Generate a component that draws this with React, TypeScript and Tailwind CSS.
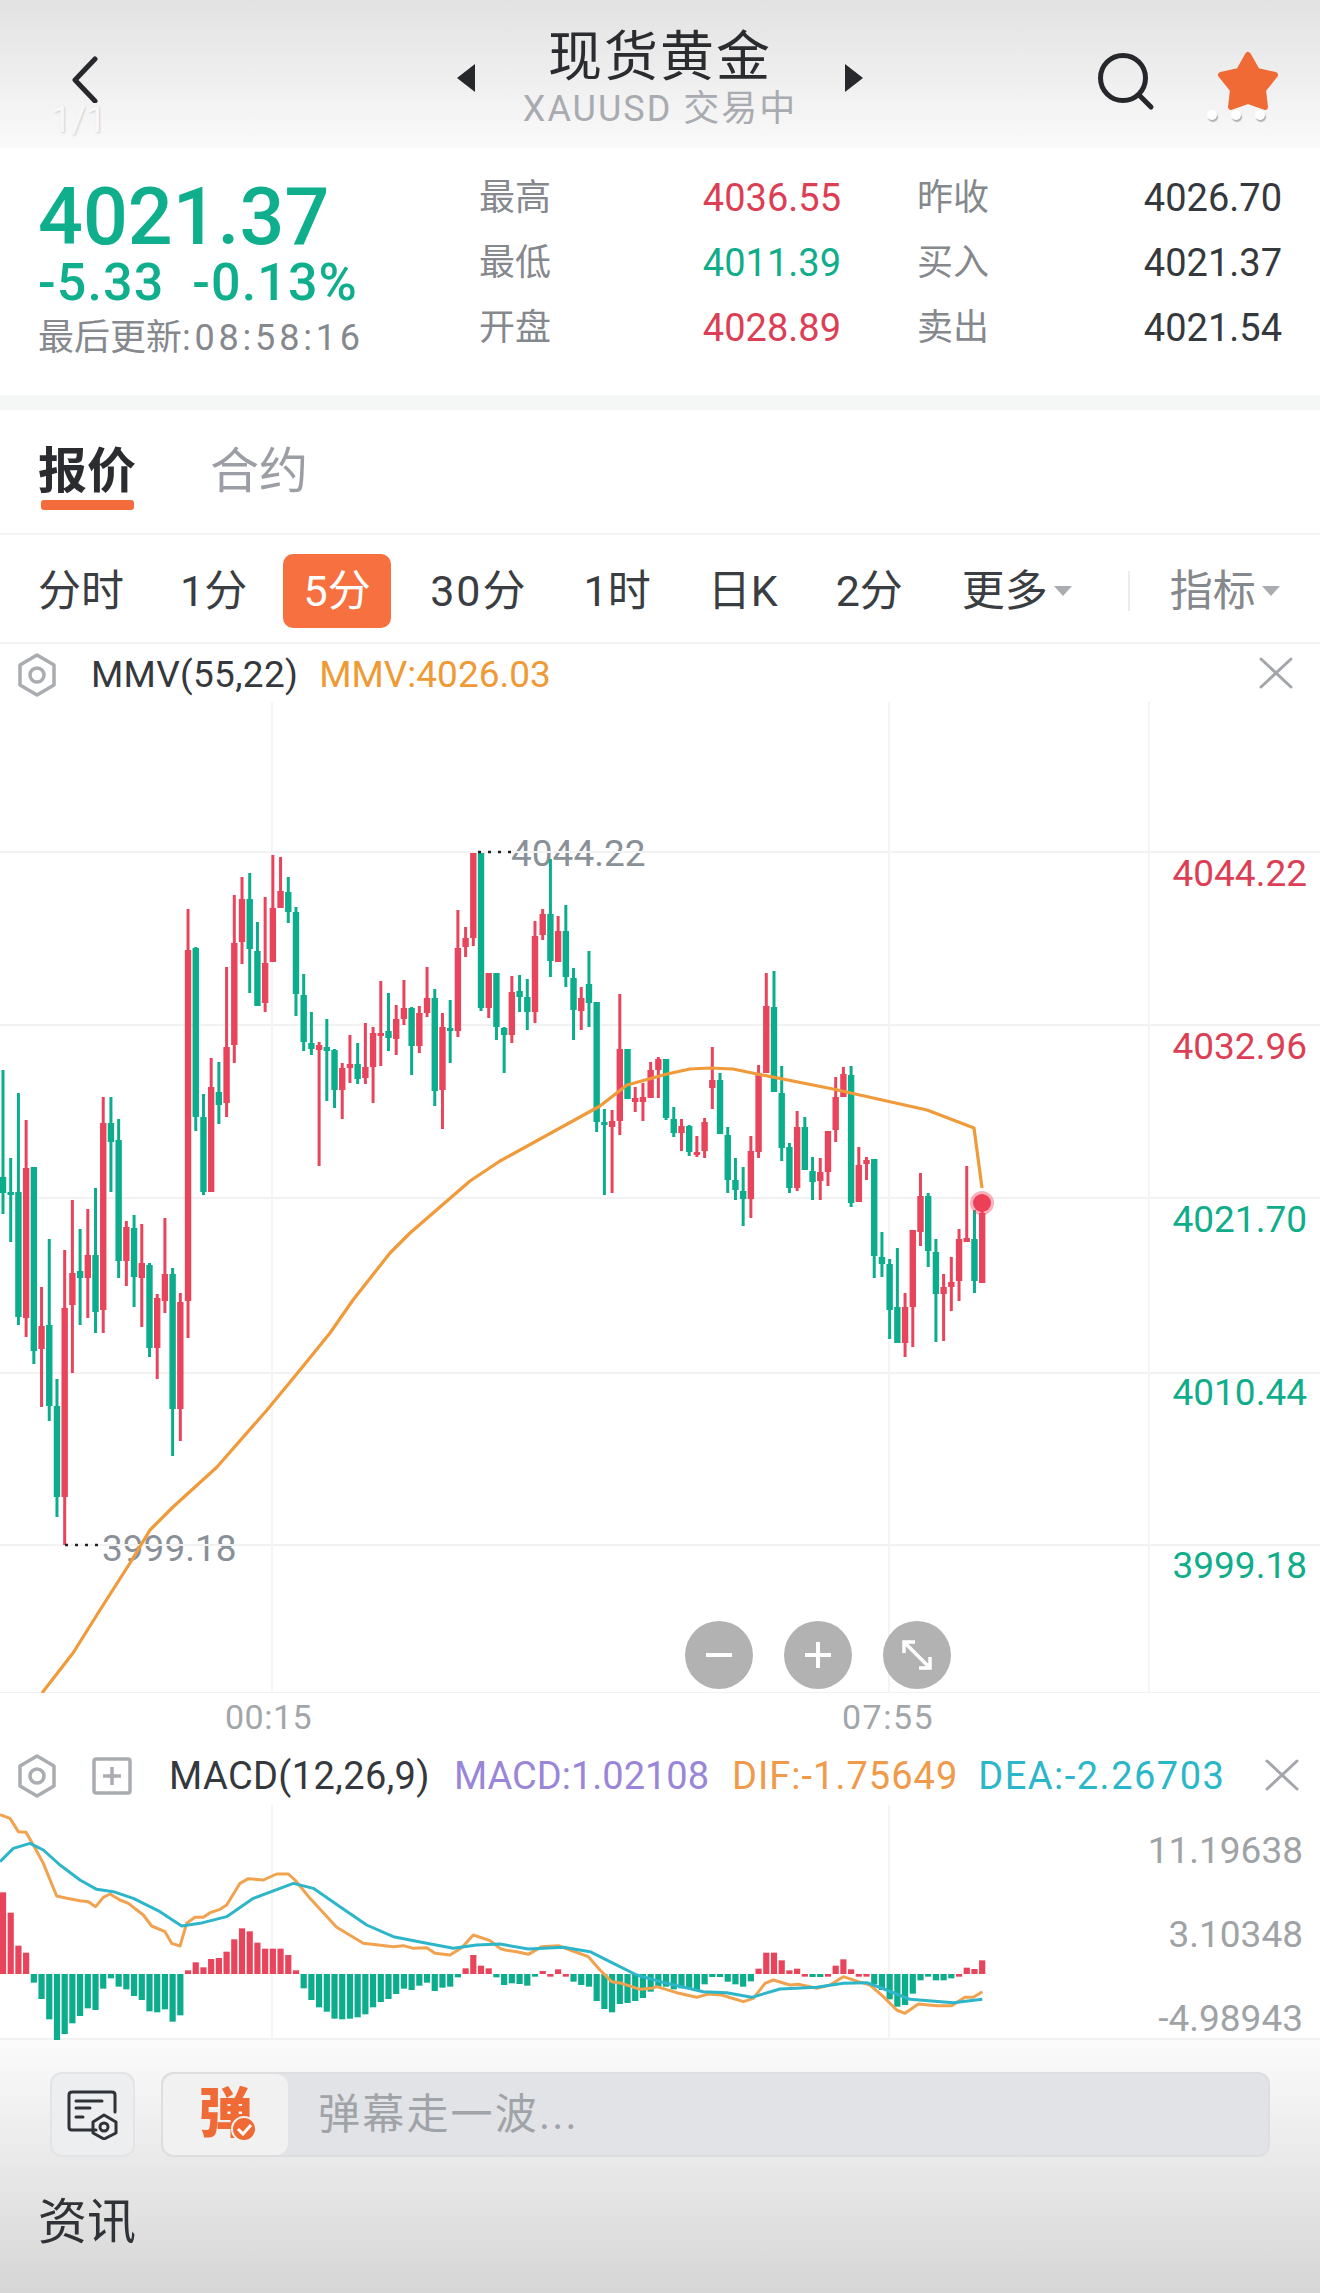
type Candle = [number, number, number, number, number];

// [0 red / 1 green, wick top, body top, body bottom, wick bottom], page coordinates
const CANDLES: Candle[] = [
  [1,1070,1177,1193,1214],[1,1158,1192,1194,1242],[1,1093,1192,1317,1325],[0,1120,1168,1318,1337],[1,1167,1167,1351,1364],
  [0,1287,1326,1349,1407],[1,1239,1325,1406,1421],[1,1379,1406,1497,1517],[0,1250,1308,1497,1545],[0,1200,1273,1305,1373],
  [1,1229,1271,1278,1325],[0,1209,1255,1278,1318],[1,1188,1255,1312,1333],[0,1097,1123,1310,1333],[1,1097,1123,1142,1192],
  [1,1119,1140,1261,1278],[0,1221,1227,1261,1286],[1,1215,1228,1277,1307],[0,1224,1263,1278,1327],[1,1263,1265,1348,1357],
  [0,1294,1298,1348,1379],[0,1218,1274,1301,1313],[1,1268,1274,1409,1456],[0,1293,1302,1409,1441],[0,909,950,1301,1338],
  [1,947,948,1117,1131],[1,1094,1117,1192,1195],[0,1058,1087,1192,1192],[1,1062,1092,1105,1124],[0,967,1047,1103,1117],
  [0,895,943,1045,1063],[0,877,899,942,964],[1,873,899,949,993],[1,922,951,1006,1006],[0,897,963,1003,1012],
  [0,855,908,962,962],[0,857,891,908,908],[1,877,892,912,923],[1,907,912,994,1016],[1,974,995,1042,1051],
  [1,1012,1043,1049,1055],[0,1042,1045,1050,1166],[1,1019,1047,1051,1101],[1,1049,1050,1090,1108],[0,1063,1068,1090,1119],
  [0,1035,1064,1068,1083],[1,1043,1064,1079,1084],[0,1023,1067,1078,1084],[0,1027,1033,1067,1103],[0,981,1033,1035,1066],
  [1,993,1031,1038,1051],[0,1005,1019,1039,1055],[0,980,1008,1019,1025],[1,1007,1008,1046,1075],[0,1006,1013,1046,1053],
  [0,967,998,1013,1017],[1,989,998,1091,1106],[0,1013,1027,1090,1129],[1,1000,1028,1030,1063],[0,910,948,1031,1037],
  [0,927,938,947,957],[0,853,853,938,946],[1,853,853,1008,1011],[0,973,973,1008,1018],[1,973,973,1027,1040],
  [1,1027,1028,1035,1073],[0,976,992,1035,1043],[1,975,991,997,1012],[1,979,997,1012,1030],[0,921,936,1012,1023],
  [0,909,914,935,940],[1,859,914,961,977],[0,916,931,962,962],[1,905,931,977,987],[1,968,978,1010,1040],
  [0,987,998,1011,1030],[1,951,984,1003,1027],[1,1002,1002,1122,1132],[1,1109,1122,1125,1195],[0,1110,1121,1127,1193],
  [0,994,1049,1121,1135],[1,1049,1049,1099,1099],[0,1087,1098,1102,1112],[0,1083,1097,1102,1121],[0,1062,1070,1098,1098],
  [0,1057,1059,1070,1098],[1,1059,1059,1118,1120],[1,1107,1119,1133,1137],[0,1119,1126,1133,1151],[1,1125,1126,1152,1156],
  [0,1136,1152,1155,1157],[0,1118,1122,1151,1158],[0,1047,1080,1088,1109],[1,1073,1080,1134,1134],[1,1127,1135,1180,1193],
  [1,1158,1180,1190,1200],[1,1167,1191,1199,1226],[0,1136,1151,1199,1218],[0,1065,1073,1152,1158],[0,973,1006,1073,1073],
  [1,971,1007,1092,1092],[1,1066,1093,1148,1161],[1,1143,1147,1188,1193],[0,1111,1127,1188,1191],[1,1117,1127,1170,1170],
  [1,1157,1171,1182,1200],[0,1158,1172,1181,1200],[0,1131,1131,1172,1186],[0,1077,1097,1130,1142],[0,1067,1074,1097,1097],
  [1,1066,1075,1203,1207],[0,1147,1165,1202,1202],[0,1157,1160,1164,1180],[1,1159,1159,1256,1278],[1,1232,1257,1264,1277],
  [1,1259,1264,1310,1339],[1,1248,1307,1343,1343],[0,1293,1307,1343,1357],[0,1230,1230,1307,1347],[0,1173,1196,1232,1246],
  [1,1193,1196,1251,1267],[1,1239,1252,1294,1342],[0,1274,1287,1294,1341],[0,1257,1282,1287,1311],[0,1229,1239,1281,1301],
  [0,1166,1238,1242,1242],[1,1210,1239,1281,1293],[0,1203,1213,1283,1283],
];

// MACD histogram, in thirds of a pixel off the zero line: plus is up
const HIST = [
  245,184,85,64,-26,-75,-136,-208,-180,-148,-126,-103,-108,-44,-13,-38,-46,-66,-78,-112,-115,-106,-143,-124,
  11,35,20,45,48,67,104,137,128,94,76,76,76,57,11,-43,-78,-100,-113,-134,-136,-134,-130,-121,-100,-84,-75,-60,-44,-48,-35,-26,-51,-41,-38,-10,
  17,57,25,17,-10,-33,-28,-30,-35,-8,9,-8,14,-8,-23,-33,-38,-81,-105,-115,-90,-87,-81,-72,-53,-38,-38,-46,-43,-43,-48,-31,-9,-9,-23,-31,-38,-22,
  16,64,64,41,11,16,-8,-9,-9,-8,25,44,14,-8,-8,-31,-48,-76,-98,-93,-59,-19,-8,-19,-19,-13,-8,19,15,41,
];
// small red dashes that sit just below the zero line
const RED_DASH = [71, 73, 104, 107, 111, 112, 124];

const MMV_LINE: number[][] = [
  [42,1693],[73,1653],[100,1610],[130,1563],[150,1530],[173,1507],[217,1467],[267,1410],[300,1370],[330,1333],[353,1300],[390,1253],[410,1233],
  [440,1207],[470,1181],[500,1161],[600,1106],[627,1085],[667,1074],[690,1069],[710,1068],[733,1069],[757,1074],[833,1089],[927,1110],[974,1128],[982,1188],
];

const DIF_LINE: number[][] = [
  [0,44],[30,55],[55,95],[78,97],[100,135],[130,190],[170,288],[200,295],[240,302],[265,305],[287,320],[310,292],[330,282],[360,300],[385,310],[430,345],
  [455,378],[495,395],[515,430],[540,438],[560,370],[585,352],[610,352],[630,338],[660,328],[680,315],[720,250],[745,236],[790,240],[830,222],[865,222],
  [885,240],[930,295],[1010,382],[1090,430],[1180,440],[1210,437],[1240,445],[1280,443],[1305,460],[1350,465],[1385,443],[1420,405],[1470,422],[1500,445],
  [1515,450],[1550,455],[1585,463],[1625,440],[1675,437],[1710,450],[1765,470],[1800,510],[1835,545],[1865,550],[1920,568],[1955,565],[1970,560],[2030,578],
  [2090,592],[2125,582],[2165,585],[2230,605],[2260,595],[2295,550],[2320,540],[2370,555],[2395,553],[2450,565],[2490,555],[2530,530],[2575,545],[2610,555],
  [2650,590],[2690,630],[2715,640],[2755,612],[2810,617],[2855,617],[2895,592],[2920,592],[2947,575],
];

const DEA_LINE: number[][] = [
  [0,185],[40,145],[90,130],[130,150],[180,195],[240,240],[290,268],[340,275],[400,295],[480,335],[545,378],[600,370],[680,350],[760,295],[880,250],[940,265],
  [1020,320],[1100,375],[1180,410],[1280,430],[1360,445],[1430,435],[1500,432],[1585,447],[1690,442],[1770,455],[1840,490],[1910,525],[2000,550],[2110,575],
  [2180,578],[2255,592],[2340,567],[2450,562],[2530,550],[2600,548],[2660,570],[2730,598],[2860,608],[2947,598],
];

const candleX = (i: number) => 3 + 7.71 * i;
const macdPoints = (line: number[][]) => line.map(([x, y]) => `${x / 3},${1800 + y / 3}`).join(" ");

const RED = "#e8455c";
const GREEN = "#0cad8c";

const STATS = [
  ["最高", "4036.55", "text-[#dc3f55]", "昨收", "4026.70"],
  ["最低", "4011.39", "text-[#10ad8b]", "买入", "4021.37"],
  ["开盘", "4028.89", "text-[#dc3f55]", "卖出", "4021.54"],
];

const HexIcon = () => (
  <svg width="42" height="46" viewBox="0 0 42 46" fill="none" stroke="#a9acb0" strokeWidth="3.5">
    <path d="M21 3 L38 13 L38 33 L21 43 L4 33 L4 13 Z" strokeLinejoin="round" />
    <circle cx="21" cy="23" r="7" />
  </svg>
);

const CloseIcon = () => (
  <svg width="36" height="34" viewBox="0 0 36 34" stroke="#a3a6aa" strokeWidth="3" strokeLinecap="round">
    <path d="M3 3 L33 31 M33 3 L3 31" />
  </svg>
);

const Triangle = () => (
  <svg width="20" height="12" viewBox="0 0 20 12" className="ml-[5px]">
    <path d="M1 1 H19 L10 11 Z" fill="#a9acb0" />
  </svg>
);

const Header = () => (
  <div className="relative h-[148px] flex items-start bg-gradient-to-b from-[#e2e2e2] to-[#fafafa]">
    <svg width="36" height="48" viewBox="0 0 36 48" className="ml-[67px] mt-[55px]" fill="none" stroke="#26282c" strokeWidth="5" strokeLinecap="round" strokeLinejoin="round">
      <path d="M28 4 L8 25 L28 46" />
    </svg>
    <svg width="22" height="30" viewBox="0 0 22 30" className="ml-[352px] mt-[63px]">
      <path d="M20 1 V29 L2 15 Z" fill="#26282c" />
    </svg>
    <div className="w-[366px] flex flex-col items-center">
      <div className="mt-[30px] text-[54px] leading-[56px] font-normal text-[#2a2c30] tracking-[2px]">现货黄金</div>
      <div className="mt-[3px] text-[36px] leading-[40px] text-[#a8abb0] tracking-[2px]">XAUUSD 交易中</div>
    </div>
    <svg width="22" height="30" viewBox="0 0 22 30" className="mt-[63px]">
      <path d="M2 1 V29 L20 15 Z" fill="#26282c" />
    </svg>
    <svg width="60" height="60" viewBox="0 0 60 60" className="ml-[233px] mt-[53px]" fill="none" stroke="#25272b" strokeWidth="5" strokeLinecap="round">
      <circle cx="25" cy="25" r="22.5" />
      <path d="M42 43 L53 54" />
    </svg>
    <svg width="66" height="62" viewBox="0 0 66 62" className="ml-[57px] mt-[50px]">
      <path d="M33 5 L42 21 L60 25 L48 40 L50 57 L33 51 L16 57 L18 40 L6 25 L24 21 Z" fill="#ef6a34" stroke="#ef6a34" strokeWidth="6" strokeLinejoin="round" />
    </svg>
    <div className="absolute left-[1207px] top-[110px] flex gap-[14px]">
      <span className="w-[10px] h-[10px] rounded-full bg-white shadow-[1px_2px_1px_#b0b0b0]" />
      <span className="w-[10px] h-[10px] rounded-full bg-white shadow-[1px_2px_1px_#b0b0b0]" />
      <span className="w-[10px] h-[10px] rounded-full bg-white shadow-[1px_2px_1px_#b0b0b0]" />
    </div>
    <div className="absolute left-[51px] top-[100px] text-[36px] leading-[40px] text-[#f8f8f8] [text-shadow:1px_1px_2px_#cfcfcf]">1/1</div>
  </div>
);

const Quote = () => (
  <div className="h-[247px] flex bg-white">
    <div className="w-[479px] pl-[38px] pt-[29px]">
      <div className="text-[79px] leading-[80px] font-medium text-[#0fae8c]">4021.37</div>
      <div className="text-[52px] leading-[50px] mt-[1px] font-medium tracking-[1.1px] text-[#0fae8c] whitespace-pre">-5.33  -0.13%</div>
      <div className="text-[36px] leading-[44px] mt-[8px] text-[#85888d]">
        最后更新<span className="tracking-[3.8px]">:08:58:16</span>
      </div>
    </div>
    <div className="mt-[27px] grid grid-cols-[362px_365px] gap-x-[76px] auto-rows-[65px]">
      {STATS.map(([a, av, color, b, bv]) => [
        <div key={a} className="flex justify-between items-center h-[46px]">
          <span className="text-[36px] text-[#85888d]">{a}</span>
          <span className={`text-[38px] ${color}`}>{av}</span>
        </div>,
        <div key={b} className="flex justify-between items-center h-[46px]">
          <span className="text-[36px] text-[#85888d]">{b}</span>
          <span className="text-[38px] text-[#35383c]">{bv}</span>
        </div>,
      ])}
    </div>
  </div>
);

const Tabs = () => (
  <div className="h-[125px] flex bg-white border-b-2 border-[#f3f3f3] pl-[38px]">
    <div className="flex flex-col items-center w-[98px] pt-[34px]">
      <span className="text-[49px] leading-[56px] font-bold text-[#2a2c30]">报价</span>
      <span className="w-[93px] h-[10px] rounded-[3px] bg-[#f56c3c]" />
    </div>
    <span className="ml-[74px] pt-[34px] text-[49px] leading-[56px] text-[#9b9ea4]">合约</span>
  </div>
);

const Periods = () => (
  <div className="h-[109px] flex items-center bg-white border-b-2 border-[#f3f3f3] text-[43px] text-[#3a3d42] pt-[5px]">
    <span className="ml-[38px]">分时</span>
    <span className="ml-[56px]">1分</span>
    <span className="ml-[36px] w-[108px] h-[74px] rounded-[10px] bg-[#f6713f] text-white flex items-center justify-center">5分</span>
    <span className="ml-[39px] tracking-[2px]">30分</span>
    <span className="ml-[56px]">1时</span>
    <span className="ml-[57px]">日K</span>
    <span className="ml-[58px]">2分</span>
    <span className="ml-[59px]">更多</span>
    <Triangle />
    <span className="ml-[55px] w-[2px] h-[40px] bg-[#ececec]" />
    <span className="ml-[40px] text-[#85888d]">指标</span>
    <Triangle />
  </div>
);

const IndicatorRow = () => (
  <div className="h-[58px] flex items-center bg-white text-[37px] tracking-[0.3px] pl-[16px] pt-[3px] relative">
    <HexIcon />
    <span className="ml-[33px] text-[#35383c]">MMV(55,22)</span>
    <span className="ml-[21px] text-[#ef9a35] tracking-[0px]">MMV:4026.03</span>
    <span className="absolute right-[26px] top-[12px] flex"><CloseIcon /></span>
  </div>
);

const ZoomButtons = () => (
  <div className="absolute left-[685px] top-[919px] flex gap-[31px]">
    <div className="w-[68px] h-[68px] rounded-full bg-[#b2b2b2] flex items-center justify-center">
      <svg width="30" height="30" viewBox="0 0 30 30" stroke="white" strokeWidth="4"><path d="M2 15 H28" /></svg>
    </div>
    <div className="w-[68px] h-[68px] rounded-full bg-[#b2b2b2] flex items-center justify-center">
      <svg width="30" height="30" viewBox="0 0 30 30" stroke="white" strokeWidth="4"><path d="M2 15 H28 M15 2 V28" /></svg>
    </div>
    <div className="w-[68px] h-[68px] rounded-full bg-[#b2b2b2] flex items-center justify-center">
      <svg width="36" height="36" viewBox="0 0 36 36" fill="none" stroke="white" strokeWidth="3.5">
        <path d="M5 5 L31 31 M5 16 V5 H16 M31 20 V31 H20" />
      </svg>
    </div>
  </div>
);

const PriceChart = () => (
  <div className="relative h-[991px] bg-white">
    <span className="absolute left-[511px] top-[132px] text-[37px] leading-[40px] text-[#8a9098]">4044.22</span>
    <span className="absolute left-[102px] top-[827px] text-[37px] leading-[40px] text-[#8a9098]">3999.18</span>
    <div className="absolute right-[13px] top-[85px] flex flex-col items-end text-[37px]">
      <span className="h-[173px] flex items-center text-[#dc3f55]">4044.22</span>
      <span className="h-[173px] flex items-center text-[#dc3f55]">4032.96</span>
      <span className="h-[173px] flex items-center text-[#10ad8b]">4021.70</span>
      <span className="h-[173px] flex items-center text-[#10ad8b]">4010.44</span>
      <span className="h-[173px] flex items-center text-[#10ad8b]">3999.18</span>
    </div>
    <svg className="absolute inset-0" width="1320" height="991" viewBox="0 702 1320 991">
      {[852, 1025, 1198, 1373, 1545, 1693].map((y) => (
        <line key={y} x1="0" x2="1320" y1={y} y2={y} stroke="#f2f2f2" strokeWidth="2" />
      ))}
      {[272, 889, 1149].map((x) => (
        <line key={x} x1={x} x2={x} y1="702" y2="1693" stroke="#f4f4f4" strokeWidth="2" />
      ))}
      {CANDLES.map(([c, top, bodyTop, bodyBottom, bottom], i) => {
        const x = candleX(i);
        const fill = c ? GREEN : RED;
        return (
          <g key={i} fill={fill}>
            <rect x={x - 1.5} y={top} width="3" height={bottom - top} />
            <rect x={x - 3.2} y={bodyTop} width="6.4" height={Math.max(bodyBottom - bodyTop, 3)} />
          </g>
        );
      })}
      <polyline points={MMV_LINE.map(([x, y]) => `${x},${y}`).join(" ")} fill="none" stroke="#f09a3a" strokeWidth="3.2" strokeLinejoin="round" />
      <circle cx="982" cy="1203" r="12" fill="#ee3f58" fillOpacity="0.4" />
      <circle cx="982" cy="1203" r="9" fill="#ee3f58" />
      <path d="M478 852 h3 m7 0 h3 m7 0 h3 m7 0 h3 M65 1545 h3 m7 0 h3 m7 0 h3 m7 0 h3" stroke="#222" strokeWidth="2.5" />
    </svg>
    <ZoomButtons />
  </div>
);

const TimeAxis = () => (
  <div className="h-[52px] bg-white relative text-[34px] leading-[48px] text-[#a3a6a9] tracking-[0.5px]">
    <span className="absolute left-[225px] top-0">00:15</span>
    <span className="absolute left-[842px] top-0 tracking-[1.5px]">07:55</span>
  </div>
);

const MacdRow = () => (
  <div className="h-[60px] flex items-center bg-white text-[38px] pl-[16px] pt-[2px] relative">
    <HexIcon />
    <svg width="40" height="38" viewBox="0 0 40 38" className="ml-[34px]" fill="none" stroke="#a9acb0" strokeWidth="3.5">
      <rect x="2" y="2" width="36" height="34" rx="2" />
      <path d="M20 10 V28 M11 19 H29" />
    </svg>
    <span className="ml-[37px] text-[#35383c] tracking-[0.4px]">MACD(12,26,9)</span>
    <span className="ml-[24px] text-[#9a86d8]">MACD:1.02108</span>
    <span className="ml-[23px] text-[#f09a4a] tracking-[1px]">DIF:-1.75649</span>
    <span className="ml-[20px] text-[#2bb6c9] tracking-[1.5px]">DEA:-2.26703</span>
    <span className="absolute right-[20px] top-[13px] flex"><CloseIcon /></span>
  </div>
);

const MacdChart = () => (
  <div className="relative h-[235px] bg-white">
    <div className="absolute right-[17px] top-[4px] flex flex-col items-end text-[37px] text-[#a0a3a6]">
      <span className="h-[84px] flex items-center">11.19638</span>
      <span className="h-[84px] flex items-center">3.10348</span>
      <span className="h-[84px] flex items-center">-4.98943</span>
    </div>
    <svg className="absolute inset-0" width="1320" height="235" viewBox="0 1805 1320 235">
      {[272, 889].map((x) => (
        <line key={x} x1={x} x2={x} y1="1805" y2="2040" stroke="#f4f4f4" strokeWidth="2" />
      ))}
      <line x1="0" x2="1320" y1="2039" y2="2039" stroke="#f2f2f2" strokeWidth="2" />
      {HIST.map((v, i) => {
        const h = Math.abs(v) / 3;
        const x = candleX(i) - 3.1;
        const red = v > 0 || RED_DASH.includes(i);
        return (
          <rect key={i} x={x} y={v > 0 ? 1974 - h : 1974} width="6.2" height={h} fill={red ? RED : GREEN} />
        );
      })}
      <polyline points={macdPoints(DIF_LINE)} fill="none" stroke="#f0a24e" strokeWidth="3" strokeLinejoin="round" />
      <polyline points={macdPoints(DEA_LINE)} fill="none" stroke="#2db5c9" strokeWidth="3" strokeLinejoin="round" />
    </svg>
  </div>
);

const Footer = () => (
  <div className="h-[253px] bg-gradient-to-b from-[#fbfbfb] to-[#d6d6d6] pt-[32px]">
    <div className="flex h-[85px]">
      <div className="ml-[50px] w-[85px] rounded-[12px] bg-[#eceef0] border-2 border-[#e2e4e6] flex items-center justify-center">
        <svg width="52" height="50" viewBox="0 0 52 50" fill="none" stroke="#2f3237" strokeWidth="3" strokeLinecap="round" strokeLinejoin="round">
          <path d="M29 40 H5 Q2 40 2 37 V5 Q2 2 5 2 H45 Q48 2 48 5 V22" />
          <path d="M9 11 H35 M9 18 H23 M9 27 H16" />
          <path d="M37 25 L49 32 V43 L37 49 L26 43 V32 Z" />
          <circle cx="37" cy="37" r="4" />
        </svg>
      </div>
      <div className="ml-[26px] w-[1109px] rounded-[12px] bg-[#e1e3e6] border-2 border-[#dcdee0] flex items-center">
        <div className="relative w-[125px] h-full rounded-[12px] bg-[#f1f1f1] flex items-center justify-center">
          <span className="text-[54px] leading-none font-black text-[#ef6a34]">弹</span>
          <svg width="26" height="26" viewBox="0 0 26 26" className="absolute left-[68px] top-[42px]">
            <circle cx="13" cy="13" r="12" fill="#ef6a34" stroke="#f1f1f1" strokeWidth="2" />
            <path d="M7 13 L12 18 L20 9" fill="none" stroke="white" strokeWidth="3" />
          </svg>
        </div>
        <span className="ml-[30px] text-[42px] text-[#a0a4a8] tracking-[2.2px]">弹幕走一波...</span>
      </div>
    </div>
    <div className="ml-[38px] mt-[38px] text-[49px] leading-[56px] text-[#2f3237]">资讯</div>
  </div>
);

export default function App() {
  return (
    <div className="w-[1320px] h-[2293px] overflow-hidden flex flex-col font-['Roboto','Noto_Sans_CJK_SC',sans-serif]">
      <Header />
      <Quote />
      <div className="h-[15px] bg-[#f5f6f6]" />
      <Tabs />
      <Periods />
      <IndicatorRow />
      <PriceChart />
      <TimeAxis />
      <MacdRow />
      <MacdChart />
      <Footer />
    </div>
  );
}
